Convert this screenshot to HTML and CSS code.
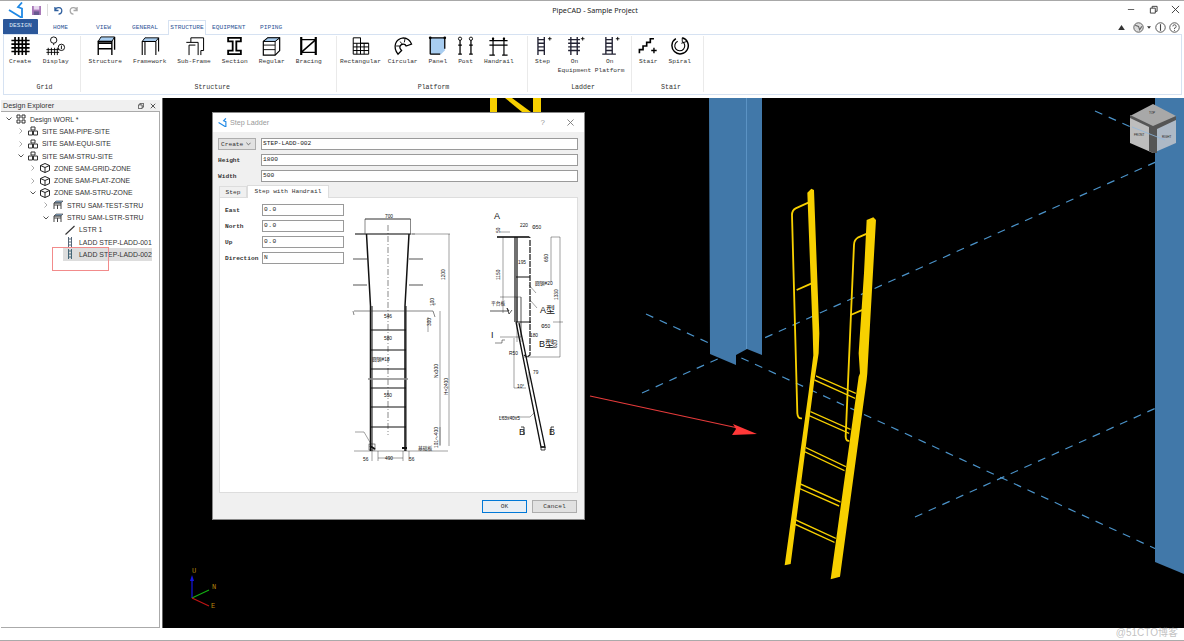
FILE: index.html
```html
<!DOCTYPE html>
<html lang="en">
<head>
<meta charset="utf-8">
<title>PipeCAD - Sample Project</title>
<link rel="stylesheet" href="styles.css">
</head>
<body>
<div class="app">
  <header class="head">
    <div class="qat">
      <svg class="logo" viewBox="0 0 16 16"><path d="M14 .5 10 5l4 1.500V16M1 8l13 8" fill="none" stroke="#1e88e5" stroke-width="1.800"/></svg>
      <svg class="qi" viewBox="0 0 10 10"><rect width="10" height="10" fill="#a878b8"/><rect x="2" y="0" width="6" height="4" fill="#e8d8f0"/><rect x="2" y="6" width="6" height="4" fill="#6a5a90"/></svg>
      <span class="qsep"></span>
      <svg class="qi" viewBox="0 0 10 10"><path d="M1 1v4h4M1.500 5A3.600 3.600 0 1 1 5 9" fill="none" stroke="#2f5f9e" stroke-width="1.400"/></svg>
      <svg class="qi" viewBox="0 0 10 10"><path d="M9 1v4H5M8.500 5A3.600 3.600 0 1 0 5 9" fill="none" stroke="#a8a8a8" stroke-width="1.400"/></svg>
    </div>
    <div class="title">PipeCAD - Sample Project</div>
    <div class="winbtns">
      <svg viewBox="0 0 10 10"><path d="M1 5h7" stroke="#555" fill="none"/></svg>
      <svg viewBox="0 0 10 10"><path d="M1.500 3.500h5.500v5.500h-5.500zM3.500 3.500v-2h5.500v5.500h-2" stroke="#333" fill="none"/></svg>
      <svg viewBox="0 0 10 10"><path d="M1 1l8 8M9 1l-8 8" stroke="#333" fill="none"/></svg>
    </div>
    <nav class="tabs">
      <span class="tab tab-design">DESIGN</span>
      <span class="tab tab-home">HOME</span>
      <span class="tab tab-view">VIEW</span>
      <span class="tab tab-general">GENERAL</span>
      <span class="tab tab-active">STRUCTURE</span>
      <span class="tab tab-equip">EQUIPMENT</span>
      <span class="tab tab-piping">PIPING</span>
      <div class="helpicons">
        <svg class="h1" viewBox="0 0 8 6"><path d="M0 6 4 0l4 6z" fill="#333"/></svg>
        <svg class="h2" viewBox="0 0 10 10"><circle cx="5" cy="5" r="4.300" fill="#ddd" stroke="#555" stroke-width=".8"/><path d="M2 3l3 1 1 3 2-3" stroke="#666" fill="none"/></svg>
        <svg class="h3" viewBox="0 0 6 4"><path d="M0 0h6L3 4z" fill="#333"/></svg>
        <svg class="h2" viewBox="0 0 10 10"><circle cx="5" cy="5" r="4.300" fill="none" stroke="#444" stroke-width=".8"/><path d="M5 2v6" stroke="#444"/></svg>
        <svg class="h2" viewBox="0 0 10 10"><circle cx="5" cy="5" r="4.300" fill="none" stroke="#444" stroke-width=".8"/><path d="M3.500 4a1.500 1.500 0 1 1 1.500 1.500V6.500M5 7.300v.8" stroke="#444" fill="none" stroke-width=".8"/></svg>
      </div>
    </nav>
  </header>

  <section class="ribbon">
    <div class="group g-grid">
      <div class="items">
        <div class="item"><svg class="ic" viewBox="0 0 22 22"><path d="M5 1v20M9 1v20M13 1v20M17 1v20M1 5h20M1 9h20M1 13h20M1 17h20" stroke="#000" stroke-width="1.800" fill="none"/></svg><span>Create</span></div>
        <div class="item"><svg class="ic" viewBox="0 0 22 22"><circle cx="9" cy="4.500" r="3.500" fill="none" stroke="#000"/><path d="M9 8v2M3 13v8M6.500 13v8M10 13v8M13 13v8M1 15h14M1 18h14" stroke="#000" fill="none"/><circle cx="17.500" cy="12.500" r="3.500" fill="none" stroke="#000"/><path d="M17.500 10.500v4" stroke="#000"/></svg><span>Display</span></div>
      </div>
      <div class="glabel">Grid</div>
    </div>
    <div class="group g-struct">
      <div class="items">
        <div class="item"><svg class="ic" viewBox="0 0 22 22"><path d="M3 6 6 1h15l-3 5z" fill="#a8cdf0" stroke="#000"/><path d="M3 6h15v2H3zM3 8v13M18 8v13M21 1v14M3 14h15" stroke="#000" stroke-width="1.500" fill="none"/></svg><span>Structure</span></div>
        <div class="item"><svg class="ic" viewBox="0 0 22 22"><path d="M3 6 6 2h15l-3 4z" fill="#a8cdf0" stroke="#000"/><path d="M3 6v15M6 6v15M18 6v15M21 2v15M3 6h15" stroke="#000" stroke-width="1.200" fill="none"/></svg><span>Framework</span></div>
        <div class="item"><svg class="ic" viewBox="0 0 22 22"><path d="M2 7h13v14M5 21V10h7M7 7V2h14v14h-3v5" stroke="#000" stroke-width="1.100" fill="none"/></svg><span>Sub-Frame</span></div>
        <div class="item"><svg class="ic" viewBox="0 0 22 22"><path d="M4 2h14v4h-5v10h5v4H4v-4h5V6H4z" fill="#fff" stroke="#000" stroke-width="2"/></svg><span>Section</span></div>
        <div class="item"><svg class="ic" viewBox="0 0 22 22"><path d="M2 6l5-4h13v14l-5 5H2z" fill="none" stroke="#000" stroke-width="1.300"/><path d="M2 6h13v15M15 6l5-4M2 10h13M2 15h13" stroke="#000" fill="none"/><path d="M2 6l5-4h13l-5 4z" fill="#a8cdf0" stroke="#000"/></svg><span>Regular</span></div>
        <div class="item"><svg class="ic" viewBox="0 0 22 22"><path d="M3 1v20M19 1v20" stroke="#000" stroke-width="2.400"/><path d="M3 4h16M3 18h16M3 18 19 4" stroke="#000" stroke-width="1.600"/></svg><span>Bracing</span></div>
      </div>
      <div class="glabel">Structure</div>
    </div>
    <div class="group g-plat">
      <div class="items">
        <div class="item item-tight"><svg class="ic" viewBox="0 0 22 22"><path d="M3 2h8v6h9v12H3zM3 8h17M3 12h17M3 16h17M7 8v12M11 2v18M15 8v12" fill="none" stroke="#000" stroke-width="1.100"/></svg><span>Rectangular</span></div>
        <div class="item"><svg class="ic" viewBox="0 0 22 22"><path d="M6 20C0 12 3 3 12 2c4 0 8 3 9 7l-6 2c-1-3-6-3-7 1 0 2 1 3 2 4z" fill="#fff" stroke="#000" stroke-width="1.400"/><path d="M8 6l3 3M4 11h4M14 2l-1 5" stroke="#000"/></svg><span>Circular</span></div>
        <div class="item"><svg class="ic" viewBox="0 0 22 22"><path d="M3 2h16v14l-4 4H3z" fill="#a8cdf0"/><path d="M3 2h16M3 2v18M19 2v12M3 20h11" stroke="#000" stroke-width="1.400" fill="none"/><circle cx="3" cy="2" r="1.500"/><circle cx="19" cy="2" r="1.500"/></svg><span>Panel</span></div>
        <div class="item"><svg class="ic" viewBox="0 0 22 22"><path d="M5 3v17M17 3v17M3 20h4M15 20h4M3 10h4M15 10h4" stroke="#000" stroke-width="1.400"/><circle cx="5" cy="3" r="1.800" fill="#fff" stroke="#000"/><circle cx="17" cy="3" r="1.800" fill="#fff" stroke="#000"/></svg><span>Post</span></div>
        <div class="item"><svg class="ic" viewBox="0 0 22 22"><path d="M5 2v19M17 2v19M1 5h20M1 10h20M1 21h6M15 21h6" stroke="#000" stroke-width="1.300" fill="none"/><circle cx="5" cy="3" r="1.300"/><circle cx="17" cy="3" r="1.300"/></svg><span>Handrail</span></div>
      </div>
      <div class="glabel">Platform</div>
    </div>
    <div class="group g-ladd">
      <div class="items">
        <div class="item item-step"><svg class="ic" viewBox="0 0 22 22"><path d="M6 1v20M13 1v20M6 4h7M6 8h7M6 12h7M6 16h7" stroke="#223" stroke-width="1.500" fill="none"/><path d="M17 3h4M19 1v4" stroke="#000"/></svg><span>Step</span></div>
        <div class="item"><svg class="ic" viewBox="0 0 22 22"><path d="M7 1v20M14 1v20M4 4h13M4 8h13M4 12h13M4 16h13" stroke="#223" stroke-width="1.500" fill="none"/><path d="M18 3h4M20 1v4" stroke="#000"/></svg><span>On<br>Equipment</span></div>
        <div class="item"><svg class="ic" viewBox="0 0 22 22"><path d="M7 1v19M14 1v19M7 4h7M7 8h7M7 12h7M7 16h7M3 20h15" stroke="#223" stroke-width="1.500" fill="none"/><path d="M18 3h4M20 1v4" stroke="#000"/></svg><span>On<br>Platform</span></div>
      </div>
      <div class="glabel">Ladder</div>
    </div>
    <div class="group g-stair">
      <div class="items">
        <div class="item"><svg class="ic" viewBox="0 0 22 22"><path d="M1 19v-4h4v-4h4V7h4V3h4" stroke="#000" stroke-width="1.800" fill="none"/><path d="M14 16h6M17 13v6" stroke="#000" stroke-width="1.500"/></svg><span>Stair</span></div>
        <div class="item"><svg class="ic" viewBox="0 0 22 22"><path d="M14 2a9 9 0 1 1-7 1" fill="none" stroke="#000" stroke-width="1.600"/><path d="M14 6a5.500 5.500 0 1 1-5-.2" fill="none" stroke="#000" stroke-width="1.200"/><path d="M14 2v4M13 8l6-2" stroke="#000"/></svg><span>Spiral</span></div>
      </div>
      <div class="glabel">Stair</div>
    </div>
  </section>

  <main class="main">
    <aside class="explorer">
      <div class="exp-head">
        <span>Design Explorer</span>
        <svg class="exp-ic" viewBox="0 0 8 8"><path d="M.5 2.500h5v5h-5zM2.500 2.500v-2h5v5h-2" stroke="#333" fill="none"/></svg>
        <svg class="exp-ic" viewBox="0 0 8 8"><path d="M1 1l6 6M7 1l-6 6" stroke="#333" stroke-width="1.100"/></svg>
      </div>
      <div class="tree">
        <div class="row l0"><svg class="ch" viewBox="0 0 6 6"><path d="M.5 1.500 3 4l2.500-2.500" fill="none" stroke="#555"/></svg><svg class="ti" viewBox="0 0 10 10"><path d="M1 1h3v3H1zM6 1h3v3H6zM1 6h3v3H1zM6 6h3v3H6z" fill="none" stroke="#333"/></svg><span>Design WORL *</span></div>
        <div class="row l1"><svg class="ch" viewBox="0 0 6 6"><path d="M1.500.5 4 3 1.500 5.500" fill="none" stroke="#aaa"/></svg><svg class="ti" viewBox="0 0 10 10"><path d="M3 1h4v3H3zM.5 5h4v4h-4zM5.500 5h4v4h-4z" fill="none" stroke="#333"/></svg><span>SITE SAM-PIPE-SITE</span></div>
        <div class="row l1"><svg class="ch" viewBox="0 0 6 6"><path d="M1.500.5 4 3 1.500 5.500" fill="none" stroke="#aaa"/></svg><svg class="ti" viewBox="0 0 10 10"><path d="M3 1h4v3H3zM.5 5h4v4h-4zM5.500 5h4v4h-4z" fill="none" stroke="#333"/></svg><span>SITE SAM-EQUI-SITE</span></div>
        <div class="row l1"><svg class="ch" viewBox="0 0 6 6"><path d="M.5 1.500 3 4l2.500-2.500" fill="none" stroke="#555"/></svg><svg class="ti" viewBox="0 0 10 10"><path d="M3 1h4v3H3zM.5 5h4v4h-4zM5.500 5h4v4h-4z" fill="none" stroke="#333"/></svg><span>SITE SAM-STRU-SITE</span></div>
        <div class="row l2"><svg class="ch" viewBox="0 0 6 6"><path d="M1.500.5 4 3 1.500 5.500" fill="none" stroke="#aaa"/></svg><svg class="ti" viewBox="0 0 10 10"><path d="M5 .5 9.500 2.500v5L5 9.500.5 7.500v-5zM.5 2.500 5 4.500l4.500-2M5 4.500v5" fill="none" stroke="#222"/></svg><span>ZONE SAM-GRID-ZONE</span></div>
        <div class="row l2"><svg class="ch" viewBox="0 0 6 6"><path d="M1.500.5 4 3 1.500 5.500" fill="none" stroke="#aaa"/></svg><svg class="ti" viewBox="0 0 10 10"><path d="M5 .5 9.500 2.500v5L5 9.500.5 7.500v-5zM.5 2.500 5 4.500l4.500-2M5 4.500v5" fill="none" stroke="#222"/></svg><span>ZONE SAM-PLAT-ZONE</span></div>
        <div class="row l2"><svg class="ch" viewBox="0 0 6 6"><path d="M.5 1.500 3 4l2.500-2.500" fill="none" stroke="#555"/></svg><svg class="ti" viewBox="0 0 10 10"><path d="M5 .5 9.500 2.500v5L5 9.500.5 7.500v-5zM.5 2.500 5 4.500l4.500-2M5 4.500v5" fill="none" stroke="#222"/></svg><span>ZONE SAM-STRU-ZONE</span></div>
        <div class="row l3"><svg class="ch" viewBox="0 0 6 6"><path d="M1.500.5 4 3 1.500 5.500" fill="none" stroke="#aaa"/></svg><svg class="ti" viewBox="0 0 10 10"><path d="M1 3l2-2h7l-2 2z" fill="#8fb4d8" stroke="#333" stroke-width=".6"/><path d="M1 3h7v2H1zM1 5v4M8 5v4M4.500 5v4" fill="none" stroke="#444"/></svg><span>STRU SAM-TEST-STRU</span></div>
        <div class="row l3"><svg class="ch" viewBox="0 0 6 6"><path d="M.5 1.500 3 4l2.500-2.500" fill="none" stroke="#555"/></svg><svg class="ti" viewBox="0 0 10 10"><path d="M1 3l2-2h7l-2 2z" fill="#8fb4d8" stroke="#333" stroke-width=".6"/><path d="M1 3h7v2H1zM1 5v4M8 5v4M4.500 5v4" fill="none" stroke="#444"/></svg><span>STRU SAM-LSTR-STRU</span></div>
        <div class="row l4"><span class="ch"></span><svg class="ti" viewBox="0 0 10 10"><path d="M.5 9.500 9.500 1" stroke="#333" stroke-width="1.100"/></svg><span>LSTR 1</span></div>
        <div class="row l4"><span class="ch"></span><svg class="ti" viewBox="0 0 10 10"><path d="M3.500 0v10M6.500 0v10M3.500 2h3M3.500 5h3M3.500 8h3" stroke="#567" stroke-width="1"/></svg><span>LADD STEP-LADD-001</span></div>
        <div class="row l4 selected"><span class="ch"></span><svg class="ti" viewBox="0 0 10 10"><path d="M3.500 0v10M6.500 0v10M3.500 2h3M3.500 5h3M3.500 8h3" stroke="#467" stroke-width="1"/></svg><span>LADD STEP-LADD-002</span></div>
      </div>
      <div class="redbox"></div>
    </aside>

    <div class="viewport">
      <svg class="scene" viewBox="163 98 1021 530">
        <g fill="none" stroke="#4b93c9" stroke-width="1.200" stroke-dasharray="8 7">
          <path d="M646 314 1156 549"/>
          <path d="M642 393 1158 161"/>
          <path d="M915 517 1156 408"/>
          <path d="M1095 111 1160 140"/>
        </g>
        <path d="M490 98h7v14h-7zM533 98h8v14h-8z" fill="#f6cf00"/>
        <path d="M505 98h7l19 14h-9z" fill="#f6cf00"/>
        <path d="M709 98h53v257l-15-6-11 6v10l-26-11z" fill="#4178a9"/>
        <path d="M746 98h1v251h-1z" fill="#5b93c4"/>
        <path d="M1155 98h29v476l-29-12z" fill="#4178a9"/>
        <g transform="translate(750 180) scale(.3333)">
          <g fill="#f7d000">
            <path d="M172 38l12-12 8 4 16 430-2 60-14 90-70 542-18 4 72-520 14-110-2-70z"/>
            <path d="M350 120l20-8 8 8-16 280-10 180-2 20-80 590-28 8 84-608 4-10-4-60 16-240z"/>
            <path d="M198 586 318 638l-1 4-119-52zM194 598l122 55-1 4-122-55zM182 693l120 53-1 4-120-53zM178 705l120 53-1 4-120-53zM168 801l120 57-1 4-120-57zM164 813l120 57-1 4-120-57zM152 910l120 54-1 4-120-54zM148 923l120 53-1 4-120-53zM138 1018l120 55-1 4-120-55zM134 1030l120 55-1 4-120-55z"/>
          </g>
          <g fill="none" stroke="#f7d000" stroke-width="5.500">
            <path d="M175 68 137 85q-11 6-11 20l16 595q1 17 14 15"/>
            <path d="M140 330l45-20"/>
            <path d="M372 152l-47 20q-13 8-13 23L287 770q1 15 11 12"/>
            <path d="M302 405l53-23"/>
          </g>
        </g>
        <g>
          <path d="M590 396 738 428" stroke="#e63b3b" stroke-width="1.200"/>
          <path d="M757 434 733 424l3 5-4 6z" fill="#ff3838"/>
        </g>
        <g>
          <path d="M1153 104l23 12-23 12-23-12z" fill="#a8a8a8"/>
          <path d="M1130 115l23 13v25l-23-10z" fill="#bdbdbd"/>
          <path d="M1176 116l-23 12v25l23-10z" fill="#aeb9c6"/>
          <path d="M1130 115l23 11 23-10v4l-19 9v24l-4 0-4-2v-24l-19-9z" fill="#555"/>
          <path d="M1132 127l33 13" stroke="#8fb8de" stroke-width=".8" fill="none"/>
          <text class="cube-t" x="1149" y="114">TOP</text>
          <text class="cube-t" x="1134" y="136">FRONT</text>
          <text class="cube-t" x="1162" y="138">RIGHT</text>
        </g>
        <g>
          <path d="M192 598V578" stroke="#1515e0" stroke-width="1.200"/>
          <path d="M192 575l-2 6h4z" fill="#1515e0"/>
          <path d="M192 598l17-8" stroke="#13b013" stroke-width="1.300"/>
          <path d="M192 598l17 8" stroke="#c01414" stroke-width="1.300"/>
          <text class="axis" x="192" y="573">U</text>
          <text class="axis" x="212" y="589">N</text>
          <text class="axis" x="211" y="608">E</text>
        </g>
      </svg>

      <div class="dialog">
        <div class="dlg-title">
          <svg class="dlg-logo" viewBox="0 0 16 16"><path d="M14 .5 10 5l4 1.500V16M1 8l13 8" fill="none" stroke="#1e88e5" stroke-width="2"/></svg>
          <span class="dlg-name">Step Ladder</span>
          <span class="dlg-q">?</span>
          <svg class="dlg-x" viewBox="0 0 8 8"><path d="M.5.500l7 7M7.500.500l-7 7" stroke="#777"/></svg>
        </div>
        <div class="dlg-body">
          <div class="frow">
            <div class="combo"><span>Create</span><svg viewBox="0 0 6 4"><path d="M.5.500 3 3 5.500.500" fill="none" stroke="#555"/></svg></div>
            <div class="input grow">STEP-LADD-002</div>
          </div>
          <div class="frow">
            <label class="flabel">Height</label>
            <div class="input grow">1800</div>
          </div>
          <div class="frow">
            <label class="flabel">Width</label>
            <div class="input grow">500</div>
          </div>
          <div class="dtabs">
            <span class="dtab">Step</span>
            <span class="dtab dtab-on">Step with Handrail</span>
          </div>
          <div class="panel">
            <div class="fields">
              <div class="frow2"><label>East</label><div class="input num">0.0</div></div>
              <div class="frow2"><label>North</label><div class="input num">0.0</div></div>
              <div class="frow2"><label>Up</label><div class="input num">0.0</div></div>
              <div class="frow2"><label>Direction</label><div class="input num">N</div></div>
            </div>
            <svg class="drawing" viewBox="340 205 237 287">
              <g fill="none" stroke="#111" stroke-width=".6">
                <path d="M365 234v-15h45.500v15M365 219h45.500" stroke-width=".5"/>
                <path d="M355 234h28M392 234h19M368 234h38" stroke="#555" stroke-width="1.400"/>
                <path d="M366.500 234l4 72v145M409 234l-4 72v145" stroke-width="1.500"/>
                <path d="M372 306v145M406 306v145" stroke-width="1"/>
                <path d="M353 259h14M409 259h14M353 285h14M409 285h14" stroke="#555" stroke-width="1.200"/>
                <path d="M388 225v210" stroke-dasharray="6 2 1 2" stroke-width=".5"/>
                <path d="M354 311h79M353 311l1 4M433 311l2 6" stroke="#333"/>
                <path d="M371 330h35M371 350h35M371 369h35M371 388h35M371 407h35M371 427h35" stroke-width="1"/>
                <path d="M368 379h40" stroke="#888" stroke-width="1.400"/>
                <path d="M411 234h4M412 234h38v0M449 234v77M432 304h4M428 317v15M440 311v60M449 311v135M440 371v75M440 427v18M354 451h94" stroke-width=".4"/>
                <path d="M372 451v10M378 451v10M403 451v10M409 451v10M378 458h25" stroke-width=".4"/>
                <rect x="369" y="444" width="6" height="6" stroke-width=".5"/>
                <path d="M370 446l5 3M402 448h5" stroke-width="2"/>
                <path d="M355 432h9l7 12" stroke-width=".4"/>
              </g>
              <g fill="none" stroke="#111" stroke-width=".6">
                <path d="M497 237h32" stroke-width="1.600"/>
                <path d="M515 237v85M517 237v85" stroke-width="1.200"/>
                <path d="M530 238q0-1-1-1M530 240v115l-3 2-3-2" stroke-width="1.200" stroke-dasharray="6 1"/>
                <path d="M516 277h14M516 322h15" stroke-width="1.200"/>
                <path d="M516 322l25 125 4 0-26-124" stroke-width="1.300"/>
                <path d="M500 297h21v40h-21M521 297v45M517 297v45" stroke-width=".4"/>
                <path d="M490 311h19l-2-3 2 6 3-4" stroke-width=".7"/>
                <path d="M551 237h9M560 237v120M551 237v45M553 322h10M524 357h36" stroke-width=".4"/>
                <path d="M503 237v76M500 232h10" stroke-width=".4"/>
                <path d="M514 338v50h12M529 372v12" stroke-width=".4"/>
                <path d="M499 417h31l5-5M529 285l7 8M530 300l7 8" stroke-width=".4"/>
                <path d="M521 427h3v8M554 427h-3v8M541 447h4v3h-4z" stroke-width=".8"/>
                <path d="M505 340l-3 0v3h-7" stroke-width=".5"/>
              </g>
              <g class="dim">
                <text x="385" y="218">700</text>
                <text x="384" y="318">546</text>
                <text x="384" y="340">580</text>
                <text x="384" y="397">550</text>
                <text x="385" y="460">490</text>
                <text x="363" y="461">56</text>
                <text x="409" y="461">56</text>
                <text x="372" y="361">圆钢#18</text>
                <text x="418" y="450">基础板</text>
                <text transform="rotate(-90 445 280)" x="445" y="280">1200</text>
                <text transform="rotate(-90 434 306)" x="434" y="306">100</text>
                <text transform="rotate(-90 431 326)" x="431" y="326">300</text>
                <text transform="rotate(-90 438 378)" x="438" y="378">Nx300</text>
                <text transform="rotate(-90 448 395)" x="448" y="395">H=2400</text>
                <text transform="rotate(-90 438 448)" x="438" y="448">101～400</text>
                <text x="520" y="227">220</text>
                <text x="532" y="229">Φ50</text>
                <text x="518" y="264">195</text>
                <text x="535" y="285">圆钢#20</text>
                <text x="541" y="328">Φ50</text>
                <text x="530" y="337">180</text>
                <text x="509" y="355">R50</text>
                <text x="533" y="374">79</text>
                <text x="517" y="388">10°</text>
                <text x="499" y="420">L63x40x5</text>
                <text transform="rotate(-90 500 280)" x="500" y="280">1150</text>
                <text transform="rotate(-90 548 262)" x="548" y="262">650</text>
                <text transform="rotate(-90 558 300)" x="558" y="300">1330</text>
                <text transform="rotate(-90 557 348)" x="557" y="348">620</text>
                <text transform="rotate(-90 500 233)" x="500" y="233">50</text>
                <text x="491" y="305">平台板</text>
                <text class="big" x="494" y="219">A</text>
                <text class="big" x="540" y="313">A型</text>
                <text class="big" x="539" y="347">B型</text>
                <text class="big" x="519" y="435">B</text>
                <text class="big" x="549" y="435">B</text>
                <text class="big" x="491" y="338">I</text>
              </g>
            </svg>
          </div>
          <div class="dlg-btns">
            <div class="btn btn-ok">OK</div>
            <div class="btn">Cancel</div>
          </div>
        </div>
      </div>
    </div>
  </main>

  <footer class="status"><span class="mark">@51CTO博客</span></footer>
</div>
</body>
</html>
```
FILE: styles.css
```css
* { box-sizing: border-box; }
html, body { margin: 0; height: 100%; background: #fff; overflow: hidden; }
body { font-family: "Liberation Mono", monospace; color: #222; }
.app { width: 1184px; height: 641px; display: flex; flex-direction: column; border-top: 1px solid #a8a8a8; border-bottom: 1px solid #aaa; position: relative; }

.head { height: 33px; position: relative; flex: none; }
.qat { display: flex; align-items: center; height: 18px; padding-left: 8px; gap: 6px; }
.logo { width: 16px; height: 16px; margin-right: 2px; }
.qi { width: 9px; height: 9px; }
.qsep { width: 1px; height: 12px; background: #ddd; }
.title { position: absolute; left: 0; right: 0; top: 4px; text-align: center; font: 7.200px "Noto Sans", sans-serif; color: #222; padding-left: 6px; }
.winbtns { position: absolute; top: 4px; right: 3px; display: flex; gap: 12px; }
.winbtns svg { width: 9px; height: 9px; margin-right: 1px; }

.tabs { position: absolute; left: 0; right: 0; top: 18px; height: 15px; }
.tab { position: absolute; top: 3px; font-size: 6.200px; line-height: 12px; color: #2f5597; }
.tab-design { left: 3px; top: 0; width: 35px; height: 15px; line-height: 14px; text-align: center; background: #2b579a; color: #dfe8f5; border-radius: 1px 1px 0 0; }
.tab-home { left: 53px; }
.tab-view { left: 96px; }
.tab-general { left: 132px; }
.tab-active { left: 168px; top: 1px; width: 38px; height: 15px; line-height: 14px; text-align: center; background: #fff; border: 1px solid #d6e2f2; border-bottom: 0; z-index: 2; }
.tab-equip { left: 212px; }
.tab-piping { left: 260px; }
.helpicons { position: absolute; right: 4px; top: 3px; display: flex; align-items: center; gap: 3px; }
.h1 { width: 7px; height: 5px; margin-right: 5px; }
.h2 { width: 11px; height: 11px; }
.h3 { width: 4px; height: 3px; margin-right: 1px; }

.ribbon { flex: none; height: 61px; margin: 0 2px 0 3px; border: 1px solid #d6e2f2; display: flex; background: #fff; }
.group { flex: none; display: flex; flex-direction: column; margin: 1px 0 2px; border-right: 1px solid #eaeaea; }
.g-grid { width: 77px; padding-left: 5px; }
.g-struct { width: 256px; padding-left: 7.500px; }
.g-plat { width: 191px; padding-left: 3px; }
.g-ladd { width: 104px; padding-left: 7px; }
.g-stair { width: 72px; padding-left: 7px; }
.items { display: flex; gap: 11px; flex: 1; }
.g-grid .items { gap: 11.500px; }
.g-ladd .items { gap: 3.500px; }
.item { display: flex; flex-direction: column; align-items: center; font-size: 6.200px; line-height: 9px; text-align: center; color: #333; white-space: nowrap; }
.item-tight { margin-right: -4px; }
.item-step { margin-right: 4.500px; }
.ic { width: 21px; height: 20px; margin: 0 -6px 1px; flex: none; }
.glabel { text-align: center; font-size: 6.600px; line-height: 9px; color: #333; }

.main { flex: 1; display: flex; min-height: 0; padding-top: 3px; }
.explorer { width: 162px; flex: none; padding: 2px 2px 0 1px; position: relative; }
.exp-head { height: 11px; display: flex; align-items: center; gap: 6px; padding: 0 4px 0 2px; font: 7.200px "Liberation Sans", sans-serif; color: #333; background: #f0f0f0; }
.exp-head span { flex: 1; }
.exp-ic { width: 6px; height: 6px; }
.tree { border: 1px solid #aaa; height: 517px; padding-top: 1px; border-width: 1px 1px 1px 0; }
.row { height: 12.300px; display: flex; align-items: center; font: 6.900px "Liberation Sans", sans-serif; color: #333; white-space: nowrap; }
.ch { width: 6px; height: 6px; flex: none; margin-right: 4px; }
.ti { width: 10px; height: 10px; flex: none; margin-right: 4px; }
.l0 { padding-left: 5px; }
.l1 { padding-left: 17px; }
.l2 { padding-left: 29px; }
.l3 { padding-left: 42px; }
.l4 { padding-left: 54px; }
.selected { background: linear-gradient(90deg, #fff 0, #fff 62px, #ddd 62px, #ddd 151px, #fff 151px); }
.redbox { position: absolute; left: 52px; top: 149px; width: 57px; height: 24px; border: 1px solid #f28b8b; }

.viewport { flex: 1; background: #000; position: relative; border-left: 1px solid #666; }
.scene { position: absolute; inset: 0; width: 100%; height: 100%; display: block; }
.cube-t { font: 3px "Liberation Sans", sans-serif; fill: #222; }
.axis { font: 7px "Liberation Mono", monospace; fill: #b8860b; }

.dialog { position: absolute; left: 49px; top: 14px; width: 373px; height: 408px; background: #f0f0f0; border: 1px solid #888; display: flex; flex-direction: column; }
.dlg-title { height: 19px; background: #fff; display: flex; align-items: center; padding: 0 10px 0 5px; flex: none; }
.dlg-logo { width: 9px; height: 9px; margin-right: 3px; }
.dlg-name { font: 7.200px "Liberation Sans", sans-serif; color: #999; flex: 1; }
.dlg-q { font: 8px "Liberation Sans", sans-serif; color: #999; margin-right: 22px; }
.dlg-x { width: 7px; height: 7px; }
.dlg-body { flex: 1; padding: 6px 6px 6px 5px; display: flex; flex-direction: column; font-size: 6.200px; color: #333; }
.frow { display: flex; height: 12px; margin-bottom: 4px; gap: 5px; align-items: center; flex: none; }
.flabel { width: 38px; flex: none; font-weight: bold; }
.combo { width: 38px; height: 12px; flex: none; display: flex; align-items: center; justify-content: space-between; padding: 0 4px 0 2px; background: #e1e1e1; border: 1px solid #adadad; }
.combo svg { width: 5px; height: 4px; }
.input { height: 12px; background: #fff; border: 1px solid #9a9a9a; line-height: 10px; padding-left: 1px; color: #222; white-space: nowrap; }
.grow { flex: 1; }
.dtabs { display: flex; height: 11px; padding-left: 1px; flex: none; }
.dtab { line-height: 12px; background: #f0f0f0; border: 1px solid #ddd; border-bottom: 0; width: 28px; text-align: center; font-size: 6.200px; }
.dtab-on { background: #fff; width: 82px; margin-top: -1px; height: 13px; position: relative; z-index: 1; }
.panel { height: 296px; background: #fff; border: 1px solid #ddd; padding: 6px 0 0 5px; display: flex; flex: none; margin-left: 1px; position: relative; }
.fields { width: 119px; flex: none; display: flex; flex-direction: column; gap: 4px; }
.frow2 { display: flex; height: 12px; align-items: center; flex: none; }
.frow2 label { width: 37px; flex: none; font-weight: bold; }
.num { width: 82px; letter-spacing: .5px; padding-left: 1px; }
.drawing { position: absolute; left: 120px; top: 7px; width: 237px; height: 287px; overflow: hidden; }
.dim text { font: 4.800px "Liberation Sans", "Noto Sans CJK SC", sans-serif; fill: #111; }
.dim text.big { font-size: 9px; }
.dlg-btns { display: flex; justify-content: flex-end; gap: 5px; margin-top: 7px; padding-right: 1px; }
.btn { width: 45px; height: 13px; line-height: 11px; text-align: center; background: #e1e1e1; border: 1px solid #adadad; }
.btn-ok { border: 1px solid #0078d7; background: #e8eef4; }

.status { height: 12px; flex: none; position: relative; }
.mark { position: absolute; right: 6px; top: -4px; font: 10px "Liberation Sans", "Noto Sans CJK SC", sans-serif; color: rgba(130, 130, 130, .5); }
```
